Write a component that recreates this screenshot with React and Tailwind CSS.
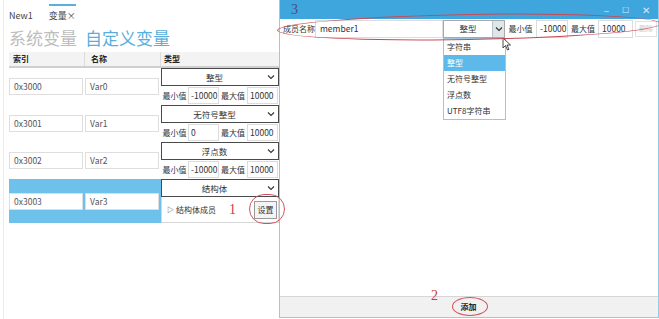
import React from "react";

const font = { fontFamily: '"Noto Sans CJK SC", "Noto Sans", sans-serif' };

const Chevron = () => (
  <svg width="8" height="6" viewBox="0 0 8 6" className="shrink-0">
    <path d="M1 1.5 L4 4.5 L7 1.5" fill="none" stroke="#333" strokeWidth="1.1" />
  </svg>
);

const Select = ({ value }) => (
  <div className="h-[18px] border border-[#4a4a4a] bg-white flex items-center pr-[3px]">
    <div className="flex-1 text-center text-[8.5px] text-[#333]">{value}</div>
    <Chevron />
  </div>
);

const MinMax = ({ min, max }) => (
  <div className="h-[19px] flex items-center text-[8px] text-[#333] whitespace-nowrap">
    <span className="w-[27px] text-center">最小值</span>
    <div className="w-[31px] h-[17px] border border-[#dcdcdc] flex items-center px-[2px] text-[8.5px]">{min}</div>
    <span className="w-[28px] text-center">最大值</span>
    <div className="w-[31px] h-[17px] border border-[#dcdcdc] flex items-center px-[2px] text-[8.5px]">{max}</div>
  </div>
);

const Cell = ({ text }) => (
  <div className="w-[76px] flex items-center pr-[2px]">
    <div className="w-full h-[17px] border border-[#dedede] bg-white flex items-center px-[4px] text-[8.5px] text-[#555]">
      {text}
    </div>
  </div>
);

const rows = [
  { idx: "0x3000", name: "Var0", type: "整型", min: "-10000", max: "10000" },
  { idx: "0x3001", name: "Var1", type: "无符号整型", min: "0", max: "10000" },
  { idx: "0x3002", name: "Var2", type: "浮点数", min: "-10000", max: "10000" },
];

export default function App() {
  return (
    <div className="w-[659px] h-[319px] bg-white flex relative overflow-hidden" style={font}>
      {/* left panel */}
      <div className="w-[279px] shrink-0 h-full pl-[3px]">
        <div className="h-full border-l border-[#ececec] pl-[5px]">
          {/* tabs */}
          <div className="h-[28px] flex items-start text-[9px] text-[#444]">
            <span className="mt-[9px]">New1</span>
            <div className="ml-[16px] mt-[4px] flex flex-col">
              <div className="h-[2px] w-[27px] bg-[#5ab0dc]" />
              <span className="mt-[3px]">变量×</span>
            </div>
          </div>
          {/* headline */}
          <div className="h-[22px] flex items-center text-[17px] leading-[22px] -mt-[1px]">
            <span className="text-[#bdbdbd]">系统变量</span>
            <span className="ml-[8px] text-[#5aaedc]">自定义变量</span>
          </div>
          {/* header */}
          <div className="mt-[3px] h-[16px] flex bg-[#f3f3f3] border-b-2 border-[#cfcfcf] text-[8px] font-bold text-[#222]">
            <div className="w-[76px] border-r border-[#dcdcdc] pl-[4px] flex items-center">索引</div>
            <div className="w-[76px] border-r border-[#dcdcdc] pl-[6px] flex items-center">名称</div>
            <div className="flex-1 pl-[3px] flex items-center">类型</div>
          </div>
          {rows.map((r) => (
            <div key={r.idx} className="h-[37px] flex">
              <Cell text={r.idx} />
              <Cell text={r.name} />
              <div className="flex-1 flex flex-col">
                <Select value={r.type} />
                <MinMax min={r.min} max={r.max} />
              </div>
            </div>
          ))}
          {/* selected struct row */}
          <div className="h-[44px] flex">
            <div className="w-[152px] bg-[#6ec1ea] flex">
              <Cell text="0x3003" />
              <Cell text="Var3" />
            </div>
            <div className="flex-1 flex flex-col">
              <Select value="结构体" />
              <div className="h-[26px] border border-[#d6d6d6] border-t-0 flex items-center pl-[5px] pr-[1px] text-[8px] text-[#333]">
                <span className="text-[7px] mr-[2px]">▷</span>
                <span className="flex-1">结构体成员</span>
                <div className="w-[23px] h-[18px] border border-[#9a9a9a] bg-[#f4f4f4] flex items-center justify-center">设置</div>
              </div>
            </div>
          </div>
        </div>
      </div>

      {/* right window */}
      <div className="w-[380px] h-[318px] border-x border-b border-[#8fcdeb] flex flex-col">
        <div className="h-[19px] bg-[#3fa6dd] flex items-center justify-end pr-[8px] gap-[13px] text-[10px] text-[#d6ecf8]">
          <span className="leading-none">–</span>
          <span className="leading-none text-[8px]">☐</span>
          <span className="leading-none">✕</span>
        </div>
        <div className="h-[19px] flex items-center text-[8px] text-[#333] whitespace-nowrap">
          <span className="w-[35px] pl-[3px]">成员名称</span>
          <div className="w-[128px] h-[18px] border border-[#dcdcdc] flex items-center px-[4px] text-[8.5px]">member1</div>
          <div className="w-[62px] h-[18px] border border-[#a9a9a9] flex items-center">
            <div className="flex-1 text-center text-[8.5px]">整型</div>
            <div className="w-[12px] h-full bg-[#dfe6ea] border-l border-[#b8c4ca] flex items-center justify-center">
              <Chevron />
            </div>
          </div>
          <span className="w-[31px] text-center">最小值</span>
          <div className="w-[32px] h-[18px] border border-[#dcdcdc] flex items-center px-[3px] text-[8.5px]">-10000</div>
          <span className="w-[30px] text-center">最大值</span>
          <div className="w-[35px] h-[18px] border border-[#dcdcdc] flex items-center px-[3px] text-[8.5px]">10000</div>
          <div className="ml-[2px] w-[22px] h-[16px] border border-[#e2e2e2] flex items-center justify-center text-[7px] text-[#c8c8c8]">删除</div>
        </div>
        <div className="flex-1" />
        <div className="h-[21px] bg-[#f1f1f1] border-t border-[#d6d6d6] flex items-center justify-center">
          <span className="text-[8px] font-bold text-[#222] ml-[-1px]">添加</span>
        </div>
      </div>

      {/* dropdown list */}
      <div className="absolute left-[443px] top-[38px] w-[63px] border border-[#9ec6dc] bg-white text-[8px] text-[#333]">
        <div className="h-[16px] flex items-center px-[3px]">字符串</div>
        <div className="h-[16px] flex items-center px-[3px] bg-[#5db9e9] text-white">整型</div>
        <div className="h-[16px] flex items-center px-[3px]">无符号整型</div>
        <div className="h-[16px] flex items-center px-[3px]">浮点数</div>
        <div className="h-[16px] flex items-center px-[3px]">UTF8字符串</div>
      </div>

      {/* cursor */}
      <svg className="absolute left-[502px] top-[37px]" width="10" height="14" viewBox="0 0 10 14">
        <path d="M1 1 L1 11 L3.5 8.5 L5.5 13 L7 12.3 L5 8 L8.5 8 Z" fill="white" stroke="#333" strokeWidth="0.9" />
      </svg>

      {/* annotations */}
      <div className="absolute left-[277px] top-[14px] w-[384px] h-[26px] rounded-[50%] border border-[#c94a55] -rotate-[1deg]" />
      <span className="absolute left-[291px] top-[3px] text-[14px] leading-none text-[#4f4a86]" style={{ fontFamily: '"Liberation Serif", serif' }}>3</span>
      <div className="absolute left-[249px] top-[194px] w-[36px] h-[30px] rounded-full border border-[#d2555e]" />
      <span className="absolute left-[229px] top-[203px] text-[14px] leading-none text-[#d23a3a]" style={{ fontFamily: '"Liberation Serif", serif' }}>1</span>
      <div className="absolute left-[452px] top-[297px] w-[36px] h-[19px] rounded-[50%] border border-[#d2555e]" />
      <span className="absolute left-[431px] top-[289px] text-[14px] leading-none text-[#d23a3a]" style={{ fontFamily: '"Liberation Serif", serif' }}>2</span>
    </div>
  );
}
